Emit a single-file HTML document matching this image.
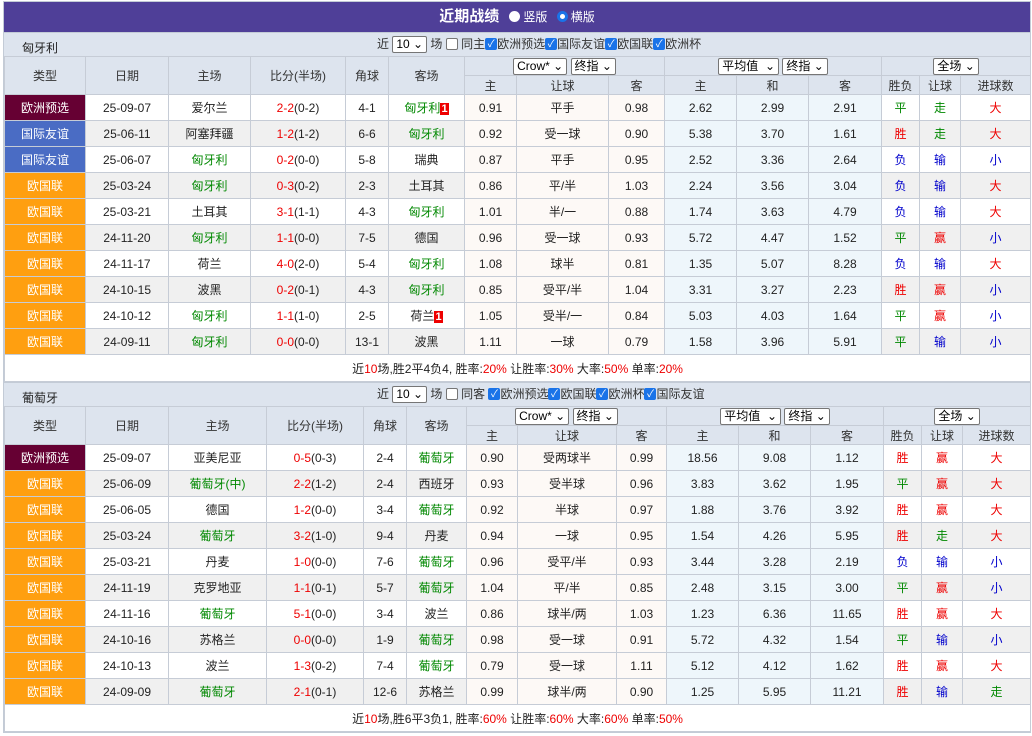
<!DOCTYPE html>
<html><head><meta charset="utf-8">
<style>
*{box-sizing:border-box}
body{margin:0;width:1032px;height:736px;background:#fff;font-family:"Liberation Sans","Noto Sans CJK SC",sans-serif;font-size:12px;color:#222;overflow:hidden}
.wrap{position:absolute;left:3px;top:1px;width:1028px;border:1px solid #c3cbd6}
.title{height:30px;background:#4f3f98;color:#fff;text-align:center;font-weight:bold;font-size:15px;line-height:30px}
.title span{font-weight:normal;font-size:12px}
.rad{display:inline-block;width:11px;height:11px;border-radius:50%;background:#fff;vertical-align:-1px;margin:0 3px 0 6px}
.rad.on{background:#fff;border:3px solid #1a73e8}
.bar{height:24px;background:#dde4ee;position:relative;border-top:1px solid #c3cbd6}
.bar .nm{position:absolute;left:18px;top:6px;font-size:12px}
.bar .ctl{position:absolute;top:2px;font-size:12px;color:#333;white-space:nowrap;line-height:19px}
.sel{display:inline-block;border:1px solid #767676;background:#fff;height:17px;line-height:15px;padding:0 3px;font-size:12px;border-radius:2px;vertical-align:middle;color:#000}
.cb{display:inline-block;width:12px;height:12px;border:1px solid #767676;border-radius:2px;background:#fff;vertical-align:middle;margin-top:-2px}
.cb.on{background:#1a73e8;border-color:#1a73e8;color:#fff;font-size:10px;line-height:11px;text-align:center;font-style:normal}
table{border-collapse:collapse;table-layout:fixed;width:1026px}
td{border:1px solid #c6ccd6;text-align:center;height:26px;padding:0;white-space:nowrap;overflow:hidden}
.hd td{background:#dde4ee;height:19px;color:#333}
.t1{background:#660033;color:#fff}.t2{background:#4a6cc4;color:#fff}.t3{background:#ff9f10;color:#fff}
.o1{background:#fdf9f6}.o2{background:#eef6fb}
tr.g td.b{background:#f0f0f0}
.r{color:#e00}.gr{color:#080}.bl{color:#00c}.tm{color:#080}
.n1{background:#e00;color:#fff;font-weight:bold;padding:0 1px;font-size:11px}
.sum td{height:27px;background:#fff}
</style></head><body>
<div class="wrap">
<div class="title">近期战绩 <span><i class="rad"></i>竖版 <i class="rad on"></i>横版</span></div>
<div class="bar"><span class="nm">匈牙利</span><span class="ctl" style="left:373px">近 <span class="sel">10 ⌄</span> 场 <i class="cb"></i> 同主<i class="cb on">✓</i>欧洲预选<i class="cb on">✓</i>国际友谊<i class="cb on">✓</i>欧国联<i class="cb on">✓</i>欧洲杯</span></div>
<table>
<colgroup><col style="width:81px"><col style="width:83px"><col style="width:82px"><col style="width:95px"><col style="width:43px"><col style="width:76px"><col style="width:52px"><col style="width:92px"><col style="width:56px"><col style="width:72px"><col style="width:72px"><col style="width:73px"><col style="width:38px"><col style="width:41px"><col style="width:70px"></colgroup>
<tr class="hd"><td rowspan="2">类型</td><td rowspan="2">日期</td><td rowspan="2">主场</td><td rowspan="2">比分(半场)</td><td rowspan="2">角球</td><td rowspan="2">客场</td><td colspan="3"><span class="sel">Crow* ⌄</span> <span class="sel">终指 ⌄</span></td><td colspan="3"><span class="sel">平均值 &nbsp;⌄</span> <span class="sel">终指 ⌄</span></td><td colspan="3"><span class="sel">全场 ⌄</span></td></tr>
<tr class="hd"><td>主</td><td>让球</td><td>客</td><td>主</td><td>和</td><td>客</td><td>胜负</td><td>让球</td><td>进球数</td></tr>
<tr><td class="t1">欧洲预选</td><td class="b">25-09-07</td><td class="b">爱尔兰</td><td class="b"><span class="r">2-2</span>(0-2)</td><td class="b">4-1</td><td class="b tm">匈牙利<span class="n1">1</span></td><td class="o1">0.91</td><td class="o1">平手</td><td class="o1">0.98</td><td class="o2">2.62</td><td class="o2">2.99</td><td class="o2">2.91</td><td class="b gr">平</td><td class="b gr">走</td><td class="b r">大</td></tr>
<tr class="g"><td class="t2">国际友谊</td><td class="b">25-06-11</td><td class="b">阿塞拜疆</td><td class="b"><span class="r">1-2</span>(1-2)</td><td class="b">6-6</td><td class="b tm">匈牙利</td><td class="o1">0.92</td><td class="o1">受一球</td><td class="o1">0.90</td><td class="o2">5.38</td><td class="o2">3.70</td><td class="o2">1.61</td><td class="b r">胜</td><td class="b gr">走</td><td class="b r">大</td></tr>
<tr><td class="t2">国际友谊</td><td class="b">25-06-07</td><td class="b tm">匈牙利</td><td class="b"><span class="r">0-2</span>(0-0)</td><td class="b">5-8</td><td class="b">瑞典</td><td class="o1">0.87</td><td class="o1">平手</td><td class="o1">0.95</td><td class="o2">2.52</td><td class="o2">3.36</td><td class="o2">2.64</td><td class="b bl">负</td><td class="b bl">输</td><td class="b bl">小</td></tr>
<tr class="g"><td class="t3">欧国联</td><td class="b">25-03-24</td><td class="b tm">匈牙利</td><td class="b"><span class="r">0-3</span>(0-2)</td><td class="b">2-3</td><td class="b">土耳其</td><td class="o1">0.86</td><td class="o1">平/半</td><td class="o1">1.03</td><td class="o2">2.24</td><td class="o2">3.56</td><td class="o2">3.04</td><td class="b bl">负</td><td class="b bl">输</td><td class="b r">大</td></tr>
<tr><td class="t3">欧国联</td><td class="b">25-03-21</td><td class="b">土耳其</td><td class="b"><span class="r">3-1</span>(1-1)</td><td class="b">4-3</td><td class="b tm">匈牙利</td><td class="o1">1.01</td><td class="o1">半/一</td><td class="o1">0.88</td><td class="o2">1.74</td><td class="o2">3.63</td><td class="o2">4.79</td><td class="b bl">负</td><td class="b bl">输</td><td class="b r">大</td></tr>
<tr class="g"><td class="t3">欧国联</td><td class="b">24-11-20</td><td class="b tm">匈牙利</td><td class="b"><span class="r">1-1</span>(0-0)</td><td class="b">7-5</td><td class="b">德国</td><td class="o1">0.96</td><td class="o1">受一球</td><td class="o1">0.93</td><td class="o2">5.72</td><td class="o2">4.47</td><td class="o2">1.52</td><td class="b gr">平</td><td class="b r">赢</td><td class="b bl">小</td></tr>
<tr><td class="t3">欧国联</td><td class="b">24-11-17</td><td class="b">荷兰</td><td class="b"><span class="r">4-0</span>(2-0)</td><td class="b">5-4</td><td class="b tm">匈牙利</td><td class="o1">1.08</td><td class="o1">球半</td><td class="o1">0.81</td><td class="o2">1.35</td><td class="o2">5.07</td><td class="o2">8.28</td><td class="b bl">负</td><td class="b bl">输</td><td class="b r">大</td></tr>
<tr class="g"><td class="t3">欧国联</td><td class="b">24-10-15</td><td class="b">波黑</td><td class="b"><span class="r">0-2</span>(0-1)</td><td class="b">4-3</td><td class="b tm">匈牙利</td><td class="o1">0.85</td><td class="o1">受平/半</td><td class="o1">1.04</td><td class="o2">3.31</td><td class="o2">3.27</td><td class="o2">2.23</td><td class="b r">胜</td><td class="b r">赢</td><td class="b bl">小</td></tr>
<tr><td class="t3">欧国联</td><td class="b">24-10-12</td><td class="b tm">匈牙利</td><td class="b"><span class="r">1-1</span>(1-0)</td><td class="b">2-5</td><td class="b">荷兰<span class="n1">1</span></td><td class="o1">1.05</td><td class="o1">受半/一</td><td class="o1">0.84</td><td class="o2">5.03</td><td class="o2">4.03</td><td class="o2">1.64</td><td class="b gr">平</td><td class="b r">赢</td><td class="b bl">小</td></tr>
<tr class="g"><td class="t3">欧国联</td><td class="b">24-09-11</td><td class="b tm">匈牙利</td><td class="b"><span class="r">0-0</span>(0-0)</td><td class="b">13-1</td><td class="b">波黑</td><td class="o1">1.11</td><td class="o1">一球</td><td class="o1">0.79</td><td class="o2">1.58</td><td class="o2">3.96</td><td class="o2">5.91</td><td class="b gr">平</td><td class="b bl">输</td><td class="b bl">小</td></tr>
<tr class="sum"><td colspan="15">近<span class="r">10</span>场,胜2平4负4, 胜率:<span class="r">20%</span> 让胜率:<span class="r">30%</span> 大率:<span class="r">50%</span> 单率:<span class="r">20%</span></td></tr>
</table>
<div class="bar"><span class="nm">葡萄牙</span><span class="ctl" style="left:373px">近 <span class="sel">10 ⌄</span> 场 <i class="cb"></i> 同客 <i class="cb on">✓</i>欧洲预选<i class="cb on">✓</i>欧国联<i class="cb on">✓</i>欧洲杯<i class="cb on">✓</i>国际友谊</span></div>
<table>
<colgroup><col style="width:81px"><col style="width:83px"><col style="width:98px"><col style="width:97px"><col style="width:43px"><col style="width:60px"><col style="width:51px"><col style="width:99px"><col style="width:50px"><col style="width:72px"><col style="width:72px"><col style="width:73px"><col style="width:38px"><col style="width:41px"><col style="width:68px"></colgroup>
<tr class="hd"><td rowspan="2">类型</td><td rowspan="2">日期</td><td rowspan="2">主场</td><td rowspan="2">比分(半场)</td><td rowspan="2">角球</td><td rowspan="2">客场</td><td colspan="3"><span class="sel">Crow* ⌄</span> <span class="sel">终指 ⌄</span></td><td colspan="3"><span class="sel">平均值 &nbsp;⌄</span> <span class="sel">终指 ⌄</span></td><td colspan="3"><span class="sel">全场 ⌄</span></td></tr>
<tr class="hd"><td>主</td><td>让球</td><td>客</td><td>主</td><td>和</td><td>客</td><td>胜负</td><td>让球</td><td>进球数</td></tr>
<tr><td class="t1">欧洲预选</td><td class="b">25-09-07</td><td class="b">亚美尼亚</td><td class="b"><span class="r">0-5</span>(0-3)</td><td class="b">2-4</td><td class="b tm">葡萄牙</td><td class="o1">0.90</td><td class="o1">受两球半</td><td class="o1">0.99</td><td class="o2">18.56</td><td class="o2">9.08</td><td class="o2">1.12</td><td class="b r">胜</td><td class="b r">赢</td><td class="b r">大</td></tr>
<tr class="g"><td class="t3">欧国联</td><td class="b">25-06-09</td><td class="b tm">葡萄牙(中)</td><td class="b"><span class="r">2-2</span>(1-2)</td><td class="b">2-4</td><td class="b">西班牙</td><td class="o1">0.93</td><td class="o1">受半球</td><td class="o1">0.96</td><td class="o2">3.83</td><td class="o2">3.62</td><td class="o2">1.95</td><td class="b gr">平</td><td class="b r">赢</td><td class="b r">大</td></tr>
<tr><td class="t3">欧国联</td><td class="b">25-06-05</td><td class="b">德国</td><td class="b"><span class="r">1-2</span>(0-0)</td><td class="b">3-4</td><td class="b tm">葡萄牙</td><td class="o1">0.92</td><td class="o1">半球</td><td class="o1">0.97</td><td class="o2">1.88</td><td class="o2">3.76</td><td class="o2">3.92</td><td class="b r">胜</td><td class="b r">赢</td><td class="b r">大</td></tr>
<tr class="g"><td class="t3">欧国联</td><td class="b">25-03-24</td><td class="b tm">葡萄牙</td><td class="b"><span class="r">3-2</span>(1-0)</td><td class="b">9-4</td><td class="b">丹麦</td><td class="o1">0.94</td><td class="o1">一球</td><td class="o1">0.95</td><td class="o2">1.54</td><td class="o2">4.26</td><td class="o2">5.95</td><td class="b r">胜</td><td class="b gr">走</td><td class="b r">大</td></tr>
<tr><td class="t3">欧国联</td><td class="b">25-03-21</td><td class="b">丹麦</td><td class="b"><span class="r">1-0</span>(0-0)</td><td class="b">7-6</td><td class="b tm">葡萄牙</td><td class="o1">0.96</td><td class="o1">受平/半</td><td class="o1">0.93</td><td class="o2">3.44</td><td class="o2">3.28</td><td class="o2">2.19</td><td class="b bl">负</td><td class="b bl">输</td><td class="b bl">小</td></tr>
<tr class="g"><td class="t3">欧国联</td><td class="b">24-11-19</td><td class="b">克罗地亚</td><td class="b"><span class="r">1-1</span>(0-1)</td><td class="b">5-7</td><td class="b tm">葡萄牙</td><td class="o1">1.04</td><td class="o1">平/半</td><td class="o1">0.85</td><td class="o2">2.48</td><td class="o2">3.15</td><td class="o2">3.00</td><td class="b gr">平</td><td class="b r">赢</td><td class="b bl">小</td></tr>
<tr><td class="t3">欧国联</td><td class="b">24-11-16</td><td class="b tm">葡萄牙</td><td class="b"><span class="r">5-1</span>(0-0)</td><td class="b">3-4</td><td class="b">波兰</td><td class="o1">0.86</td><td class="o1">球半/两</td><td class="o1">1.03</td><td class="o2">1.23</td><td class="o2">6.36</td><td class="o2">11.65</td><td class="b r">胜</td><td class="b r">赢</td><td class="b r">大</td></tr>
<tr class="g"><td class="t3">欧国联</td><td class="b">24-10-16</td><td class="b">苏格兰</td><td class="b"><span class="r">0-0</span>(0-0)</td><td class="b">1-9</td><td class="b tm">葡萄牙</td><td class="o1">0.98</td><td class="o1">受一球</td><td class="o1">0.91</td><td class="o2">5.72</td><td class="o2">4.32</td><td class="o2">1.54</td><td class="b gr">平</td><td class="b bl">输</td><td class="b bl">小</td></tr>
<tr><td class="t3">欧国联</td><td class="b">24-10-13</td><td class="b">波兰</td><td class="b"><span class="r">1-3</span>(0-2)</td><td class="b">7-4</td><td class="b tm">葡萄牙</td><td class="o1">0.79</td><td class="o1">受一球</td><td class="o1">1.11</td><td class="o2">5.12</td><td class="o2">4.12</td><td class="o2">1.62</td><td class="b r">胜</td><td class="b r">赢</td><td class="b r">大</td></tr>
<tr class="g"><td class="t3">欧国联</td><td class="b">24-09-09</td><td class="b tm">葡萄牙</td><td class="b"><span class="r">2-1</span>(0-1)</td><td class="b">12-6</td><td class="b">苏格兰</td><td class="o1">0.99</td><td class="o1">球半/两</td><td class="o1">0.90</td><td class="o2">1.25</td><td class="o2">5.95</td><td class="o2">11.21</td><td class="b r">胜</td><td class="b bl">输</td><td class="b gr">走</td></tr>
<tr class="sum"><td colspan="15">近<span class="r">10</span>场,胜6平3负1, 胜率:<span class="r">60%</span> 让胜率:<span class="r">60%</span> 大率:<span class="r">60%</span> 单率:<span class="r">50%</span></td></tr>
</table>
</div>
</body></html>
